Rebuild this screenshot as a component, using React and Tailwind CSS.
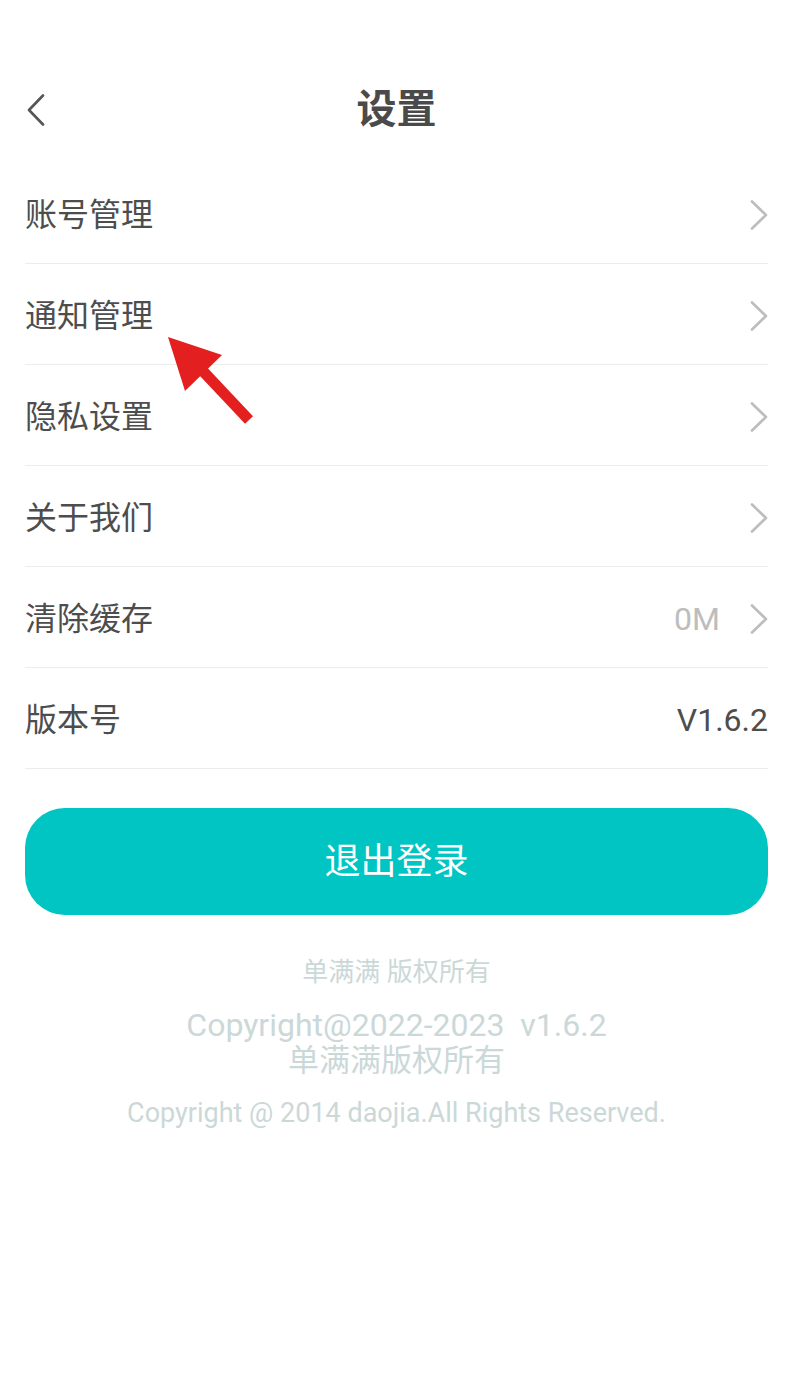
import React from 'react';

const rows = [
    { label: '账号管理', arrow: true },
    { label: '通知管理', arrow: true },
    { label: '隐私设置', arrow: true },
    { label: '关于我们', arrow: true },
    { label: '清除缓存', value: '0M', arrow: true },
    { label: '版本号', value: 'V1.6.2', dark: true },
];

function ChevronRight() {
    return (
        <svg width="18" height="30" viewBox="0 0 18 30" fill="none">
            <path d="M2 1.5 L16 15 L2 28.5" stroke="#bdbdbd" strokeWidth="2.6" strokeLinecap="round" strokeLinejoin="round" />
        </svg>
    );
}

function ChevronLeft() {
    return (
        <svg width="20" height="32" viewBox="0 0 20 32" fill="none">
            <path d="M17 1.5 L3 16 L17 30.5" stroke="#555555" strokeWidth="2.6" strokeLinecap="round" strokeLinejoin="round" />
        </svg>
    );
}

function App() {
    return (
        <div
            className="relative w-[793px] h-[1378px] overflow-hidden bg-white text-[#4d4d4d] pt-[80px]"
            style={{ fontFamily: 'Roboto, "Noto Sans CJK SC", sans-serif' }}
        >
            {/* Header */}
            <div className="flex items-center h-[60px] mb-[23px] px-[26px]">
                <div className="w-[80px] flex items-center">
                    <ChevronLeft />
                </div>
                <h1 className="flex-1 text-center text-[40px] font-bold text-[#4a4a4a] leading-none">设置</h1>
                <div className="w-[80px]" />
            </div>

            {/* Settings list */}
            <div className="mx-[25px]">
                {rows.map((row) => (
                    <div
                        key={row.label}
                        className="flex items-center justify-between h-[101px] pt-[3px] border-b border-[#ececec]"
                    >
                        <span className="text-[32px] leading-none">{row.label}</span>
                        <div className="flex items-center gap-[30px]">
                            {row.value && (
                                <span className={`text-[32px] leading-none ${row.dark ? 'text-[#4d4d4d]' : 'text-[#bdbdbd]'}`}>
                                    {row.value}
                                </span>
                            )}
                            {row.arrow && <ChevronRight />}
                        </div>
                    </div>
                ))}
            </div>

            {/* Logout */}
            <div className="mx-[25px] mt-[39px]">
                <button className="w-full h-[107px] rounded-[40px] bg-[#00c5c3] text-white text-[36px] flex items-center justify-center">
                    退出登录
                </button>
            </div>

            {/* Footer */}
            <div className="flex flex-col items-center text-[#cbd8d8]">
                <p className="mt-[39px] text-[26px] leading-[36px]">单满满 版权所有</p>
                <p className="mt-[17px] text-[32px] leading-[36px] whitespace-pre">Copyright@2022-2023  v1.6.2</p>
                <p className="text-[31px] leading-[36px]">单满满版权所有</p>
                <p className="mt-[16px] text-[27px] leading-[36px]">Copyright @ 2014 daojia.All Rights Reserved.</p>
            </div>

            {/* Red annotation arrow */}
            <svg className="absolute left-0 top-0 pointer-events-none" width="793" height="1378" viewBox="0 0 793 1378">
                <line x1="249" y1="420" x2="200" y2="368" stroke="#e3201f" strokeWidth="11" />
                <polygon points="168,337 222,355 185,391" fill="#e3201f" />
            </svg>
        </div>
    );
}

export default App;
